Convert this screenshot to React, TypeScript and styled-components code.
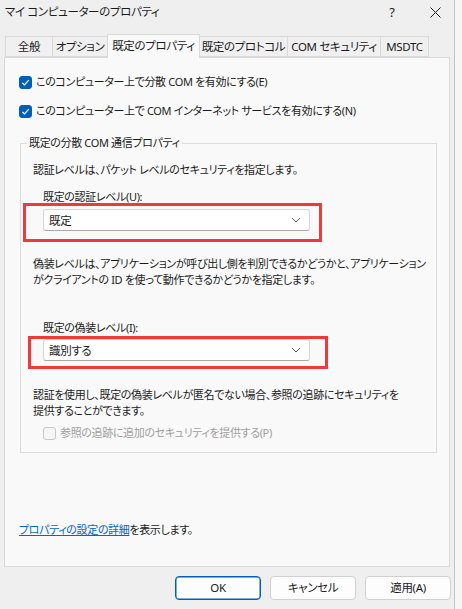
import React from "react";
import styled, { createGlobalStyle } from "styled-components";

const GlobalStyle = createGlobalStyle`
  html, body {
    margin: 0;
    padding: 0;
    background: #f6f6f6;
  }
  body {
    font-family: "Noto Sans", "Noto Sans CJK JP", sans-serif;
    font-size: 11px;
    letter-spacing: -0.35px;
    color: #1b1b1b;
    font-feature-settings: "palt";
  }
`;

const tabs = [
  { label: "全般", width: 48 },
  { label: "オプション", width: 56 },
  { label: "既定のプロパティ", width: 93, active: true },
  { label: "既定のプロトコル", width: 89 },
  { label: "COM セキュリティ", width: 94 },
  { label: "MSDTC", width: 49 },
];

const App = () => {
  return (
    <>
      <GlobalStyle />
      <Window>
        <TitleBar>
          <Title>マイ コンピューターのプロパティ</Title>
          <HelpButton>?</HelpButton>
          <CloseButton>
            <svg width="11" height="11" viewBox="0 0 11 11">
              <path d="M0.5 0.5 L10.5 10.5 M10.5 0.5 L0.5 10.5" stroke="#1b1b1b" strokeWidth="1" />
            </svg>
          </CloseButton>
        </TitleBar>

        <TabBar>
          {tabs.map((t) => (
            <Tab key={t.label} $w={t.width} $active={!!t.active}>
              {t.label}
            </Tab>
          ))}
        </TabBar>

        <Panel>
          <CheckRow>
            <CheckBox $checked>
              <CheckMark />
            </CheckBox>
            このコンピューター上で分散 COM を有効にする(E)
          </CheckRow>
          <CheckRow $gap={13}>
            <CheckBox $checked>
              <CheckMark />
            </CheckBox>
            このコンピューター上で COM インターネット サービスを有効にする(N)
          </CheckRow>

          <Group>
            <Legend>既定の分散 COM 通信プロパティ</Legend>
            <Text>認証レベルは、パケット レベルのセキュリティを指定します。</Text>
            <FieldLabel $top={11}>既定の認証レベル(U):</FieldLabel>
            <Combo $top={4}>
              既定
              <Chevron />
              <RedFrame $l={20} $r={12} $t={6} $b={11} />
            </Combo>
            <Text $top={25}>
              偽装レベルは、アプリケーションが呼び出し側を判別できるかどうかと、アプリケーション
              <br />
              がクライアントの ID を使って動作できるかどうかを指定します。
            </Text>
            <FieldLabel $top={32}>既定の偽装レベル(I):</FieldLabel>
            <Combo $top={3}>
              識別する
              <Chevron />
              <RedFrame $l={15} $r={18} $t={3} $b={8} />
            </Combo>
            <Text $top={26}>
              認証を使用し、既定の偽装レベルが匿名でない場合、参照の追跡にセキュリティを
              <br />
              提供することができます。
            </Text>
            <DisabledRow>
              <CheckBox $disabled />
              参照の追跡に追加のセキュリティを提供する(P)
            </DisabledRow>
          </Group>

          <Footnote>
            <Link>プロパティの設定の詳細</Link>を表示します。
          </Footnote>
        </Panel>

        <ButtonRow>
          <DialogButton $primary>OK</DialogButton>
          <DialogButton>キャンセル</DialogButton>
          <DialogButton>適用(A)</DialogButton>
        </ButtonRow>
      </Window>
    </>
  );
};

export default App;

const Chevron = () => (
  <ChevronIcon width="10" height="6" viewBox="0 0 10 6">
    <path d="M1 1 L5 5 L9 1" fill="none" stroke="#5c5c5c" strokeWidth="1" />
  </ChevronIcon>
);

const CheckMark = () => (
  <svg width="9" height="9" viewBox="0 0 9 9">
    <path d="M1.3 4.8 L3.5 7 L7.8 2.2" fill="none" stroke="#fff" strokeWidth="1.2" />
  </svg>
);

const Window = styled.div`
  width: 455px;
  height: 609px;
  background: #efefef;
  border-right: 1px solid #c4c4c4;
  box-sizing: border-box;
  display: flex;
  flex-direction: column;
`;

const TitleBar = styled.div`
  height: 24px;
  display: flex;
  align-items: center;
  padding-left: 5px;
`;

const Title = styled.div`
  flex: 1;
  line-height: 16px;
  font-size: 11.5px;
`;

const HelpButton = styled.div`
  width: 12px;
  margin-right: 32px;
  text-align: center;
  font-size: 13px;
`;

const CloseButton = styled.div`
  width: 11px;
  height: 11px;
  margin-right: 13px;
  display: flex;
`;

const TabBar = styled.div`
  margin-top: 10px;
  height: 23px;
  display: flex;
  align-items: flex-end;
  padding-left: 5px;
  position: relative;
  z-index: 1;
`;

const Tab = styled.div<{ $w: number; $active: boolean }>`
  width: ${(p) => p.$w}px;
  height: ${(p) => (p.$active ? 24 : 21)}px;
  margin-bottom: ${(p) => (p.$active ? -1 : 0)}px;
  box-sizing: border-box;
  margin-left: -1px;
  border: 1px solid #d9d9d9;
  border-bottom: ${(p) => (p.$active ? "none" : "1px solid #d9d9d9")};
  background: ${(p) => (p.$active ? "#f9f9f9" : "#f0f0f0")};
  display: flex;
  align-items: center;
  justify-content: center;
  padding-bottom: ${(p) => (p.$active ? 3 : 1)}px;
  white-space: nowrap;
  font-size: 11.5px;
  &:first-child {
    margin-left: 0;
  }
`;

const Panel = styled.div`
  margin-left: 4px;
  width: 446px;
  height: 510px;
  box-sizing: border-box;
  border: 1px solid #d9d9d9;
  background: #f9f9f9;
  padding: 16px 12px 0 14px;
  display: flex;
  flex-direction: column;
  align-items: flex-start;
`;

const CheckRow = styled.div<{ $gap?: number }>`
  display: flex;
  align-items: center;
  gap: 4px;
  height: 16px;
  line-height: 16px;
  margin-top: ${(p) => p.$gap ?? 0}px;
  white-space: nowrap;
`;

const CheckBox = styled.span<{ $checked?: boolean; $disabled?: boolean }>`
  width: 13px;
  height: 13px;
  box-sizing: border-box;
  border-radius: 3px;
  background: ${(p) => (p.$checked ? "#005fb8" : "#f6f6f6")};
  border: 1px solid ${(p) => (p.$checked ? "#005fb8" : p.$disabled ? "#c8c8c8" : "#8a8a8a")};
  display: inline-flex;
  align-items: center;
  justify-content: center;
  flex-shrink: 0;
`;

const Group = styled.fieldset`
  margin: 16px 0 0 1px;
  width: 417px;
  min-width: 0;
  box-sizing: border-box;
  border: 1px solid #dcdcdc;
  padding: 11px 12px 11px 12px;
  display: flex;
  flex-direction: column;
  align-items: flex-start;
`;

const Legend = styled.legend`
  margin-left: -6px;
  padding: 0 2px;
  line-height: 16px;
`;

const Text = styled.div<{ $top?: number }>`
  line-height: 16px;
  margin-top: ${(p) => p.$top ?? 0}px;
  white-space: nowrap;
`;

const FieldLabel = styled.div<{ $top: number }>`
  line-height: 16px;
  margin: ${(p) => p.$top}px 0 0 10px;
`;

const Combo = styled.div<{ $top: number }>`
  position: relative;
  margin: ${(p) => p.$top}px 0 0 10px;
  width: 267px;
  height: 22px;
  box-sizing: border-box;
  background: #ffffff;
  border: 1px solid #d6d6d6;
  border-bottom-color: #a8a8a8;
  border-radius: 3px;
  display: flex;
  align-items: center;
  padding-left: 5px;
  font-size: 11.5px;
`;

const ChevronIcon = styled.svg`
  position: absolute;
  right: 8px;
  top: 7px;
`;

const RedFrame = styled.div<{ $l: number; $r: number; $t: number; $b: number }>`
  position: absolute;
  left: ${(p) => -p.$l - 1}px;
  right: ${(p) => -p.$r - 1}px;
  top: ${(p) => -p.$t - 1}px;
  bottom: ${(p) => -p.$b - 1}px;
  border: 3px solid #ee3a3a;
  pointer-events: none;
`;

const DisabledRow = styled.div`
  margin: 6px 0 0 10px;
  display: flex;
  align-items: center;
  gap: 4px;
  height: 16px;
  line-height: 16px;
  color: #a0a0a0;
  white-space: nowrap;
`;

const Footnote = styled.div`
  margin-top: 69px;
  line-height: 16px;
`;

const Link = styled.span`
  color: #0066cc;
  text-decoration: underline;
`;

const ButtonRow = styled.div`
  display: flex;
  justify-content: flex-end;
  gap: 9px;
  margin-top: 9px;
  padding-right: 3px;
`;

const DialogButton = styled.div<{ $primary?: boolean }>`
  width: 86px;
  height: 24px;
  box-sizing: border-box;
  border-radius: 4px;
  background: #fdfdfd;
  border: 1px solid ${(p) => (p.$primary ? "#005fb8" : "#d0d0d0")};
  box-shadow: ${(p) => (p.$primary ? "inset 0 0 0 0.5px #005fb8" : "none")};
  display: flex;
  align-items: center;
  justify-content: center;
  line-height: 16px;
  font-size: 11.5px;
`;
